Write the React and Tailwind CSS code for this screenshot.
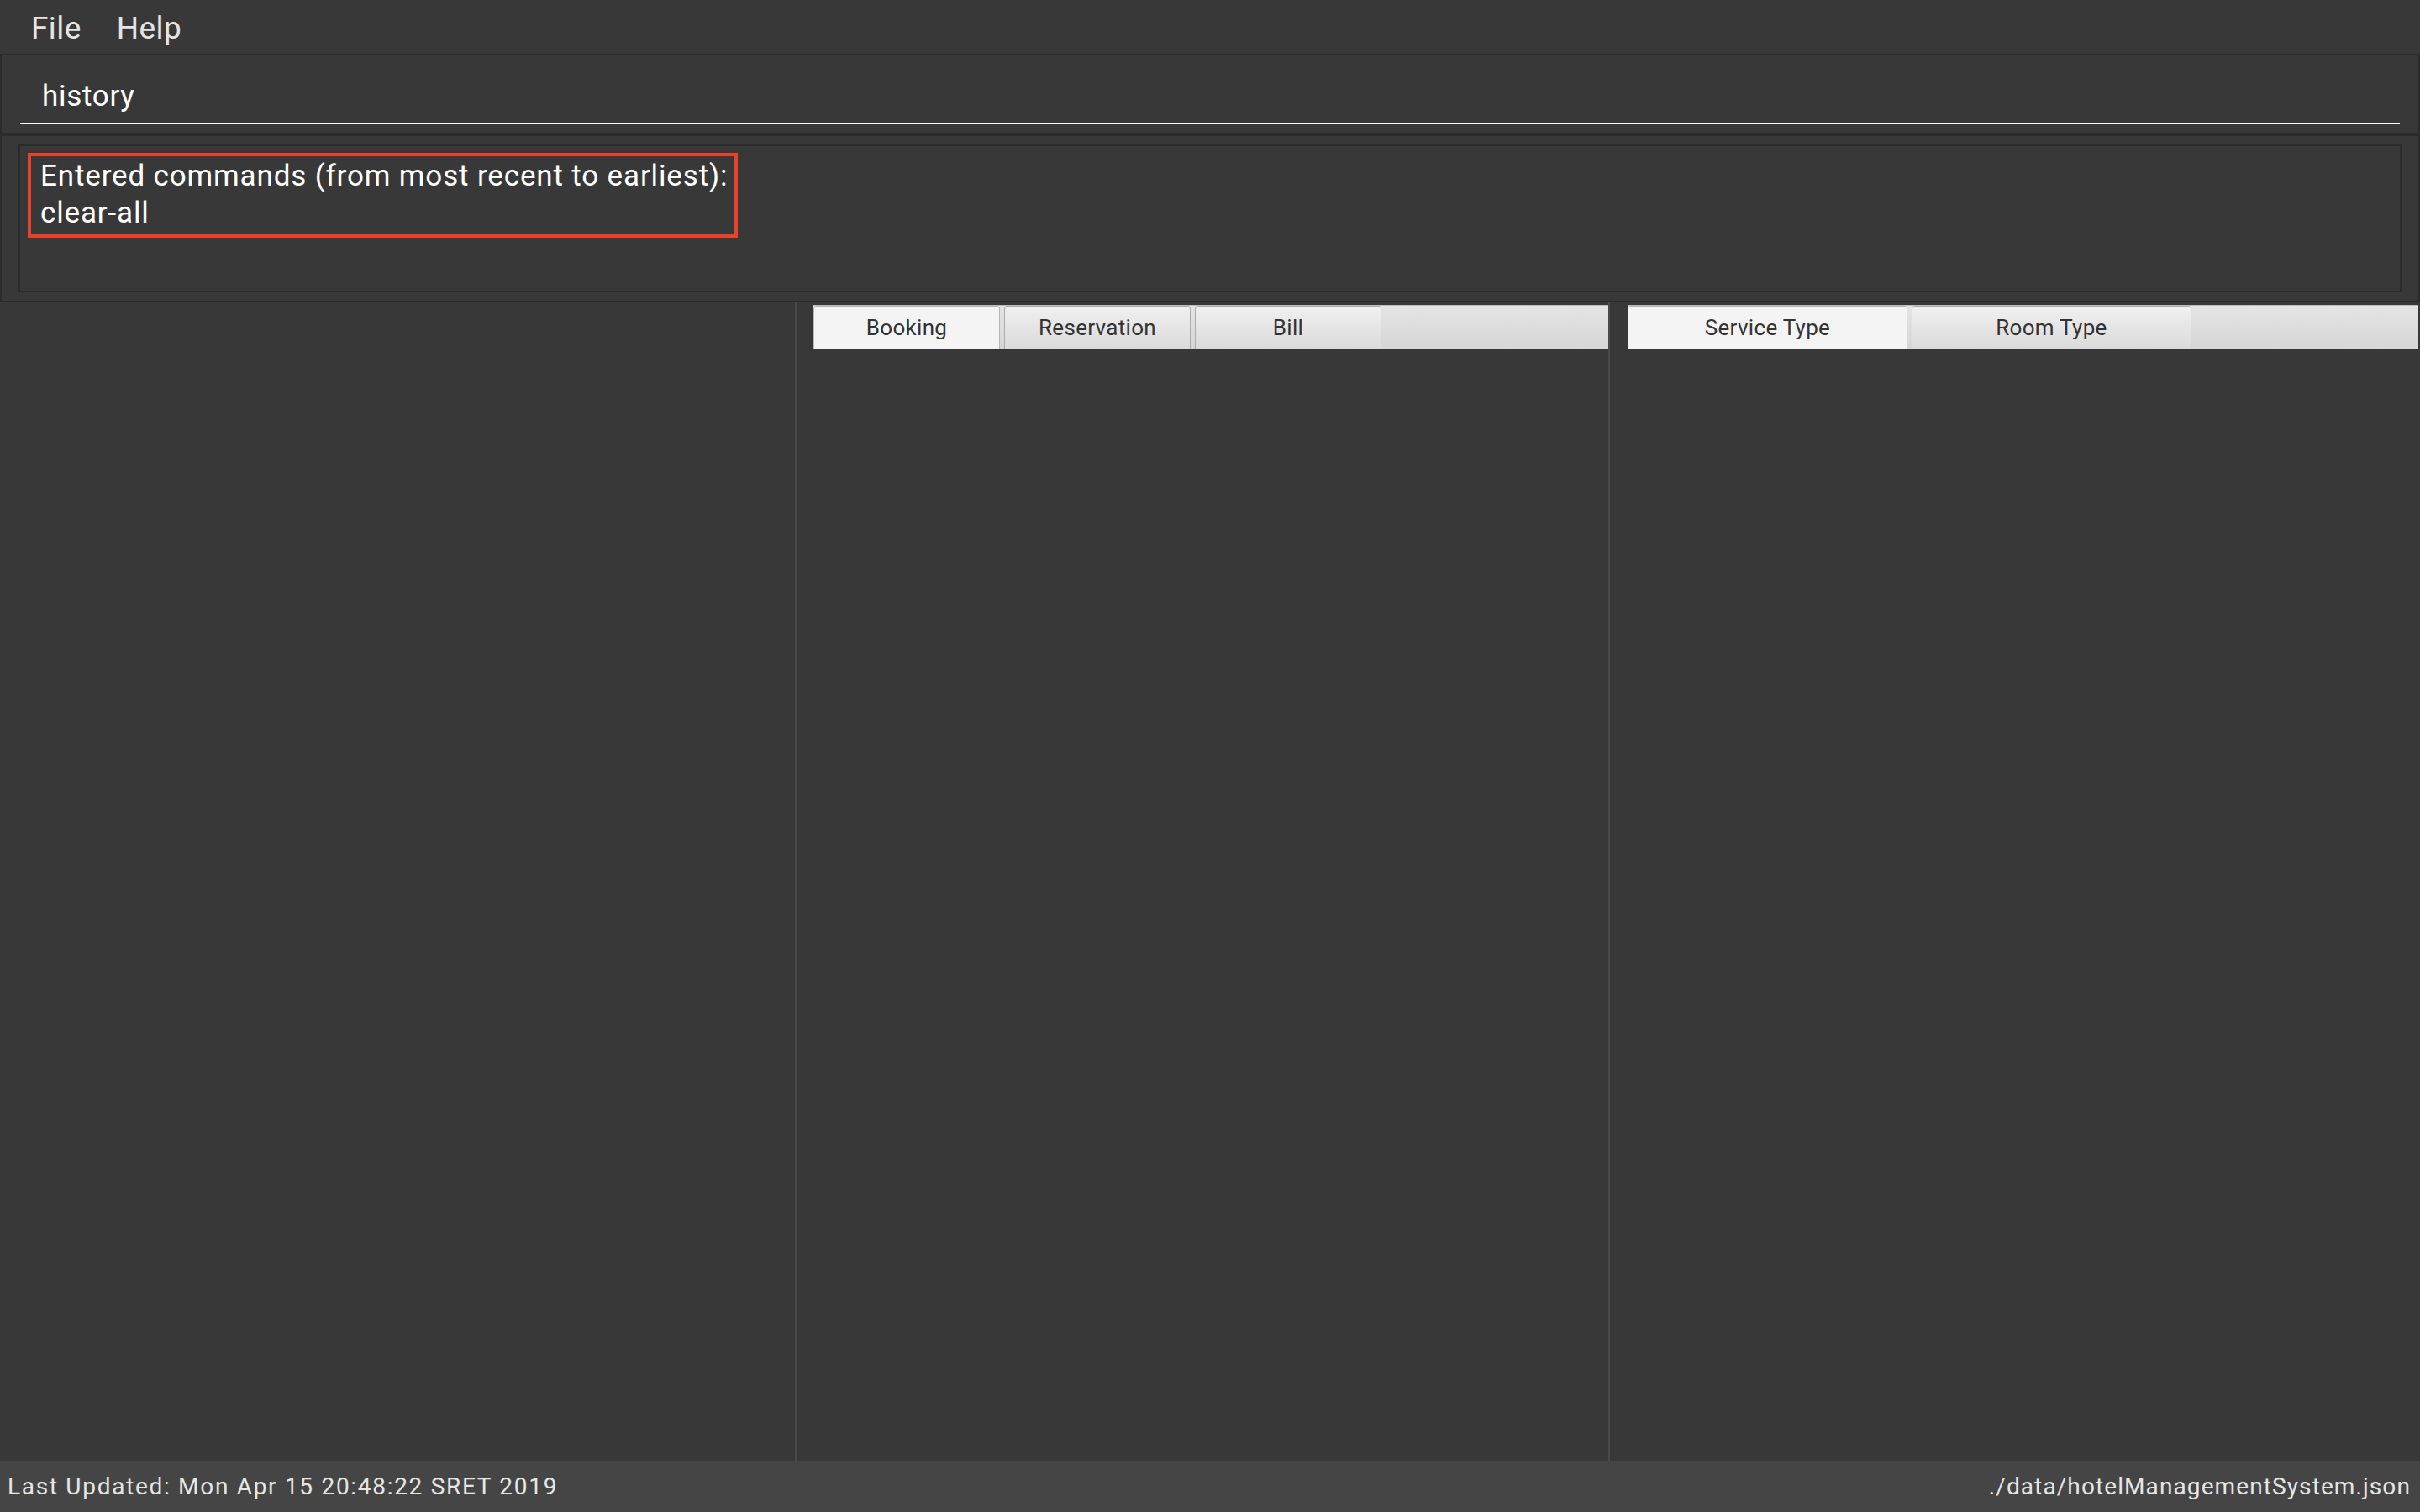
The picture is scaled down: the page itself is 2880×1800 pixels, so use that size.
export default function App() {
  const tabOff =
    "h-full flex items-center justify-center rounded-t-[4px] border border-b-0 border-[#acacac] bg-gradient-to-b from-[#f0f0f0] to-[#dadada] text-[26px] tracking-[0.3px] text-[#333333]";
  const tabOn =
    "h-full flex items-center justify-center rounded-t-[4px] border border-b-0 border-[#b5b5b5] bg-[#f4f4f4] text-[26px] tracking-[0.3px] text-[#333333]";
  return (
    <div className="h-screen w-full flex flex-col bg-[#383838] font-['Roboto','Inter',sans-serif] overflow-hidden">
      {/* menu bar */}
      <div className="h-[66px] shrink-0 flex items-center gap-[42px] pl-[37px] pt-[3px] text-[37px] tracking-[0.4px] text-[#e4e4e4] border-b-2 border-[#2b2b2b]">
        <span>File</span>
        <span>Help</span>
      </div>

      {/* command box */}
      <div className="h-[94px] shrink-0 border-x-2 border-b-2 border-[#2b2b2b] px-[22px] pt-[20px]">
        <div className="h-[62px] border-b-2 border-white flex items-center pl-[26px] pb-[2px] text-[35px] tracking-[0.7px] text-white">
          history
        </div>
      </div>

      {/* result display */}
      <div className="h-[200px] shrink-0 border-x-2 border-y-2 border-[#2b2b2b] px-[20px] pt-[10px] pb-[10px]">
        <div className="h-full border-2 border-[#2b2b2b] pl-[9px] pt-[8px]">
          <div className="inline-block border-4 border-[#e8412c] pl-[11px] pr-[8px] pt-[2px] pb-[3px] text-[35px] leading-[44px] text-white tracking-[0.85px]">
            <div>Entered commands (from most recent to earliest):</div>
            <div>clear-all</div>
          </div>
        </div>
      </div>

      {/* split pane */}
      <div className="flex-1 flex min-h-0">
        <div className="w-[946px] shrink-0" />
        <div className="w-[2px] shrink-0 bg-[#4a4a4a]" />
        <div className="w-[966px] shrink-0 pl-[20px] pt-[3px]">
          <div className="h-[53px] flex gap-[5px] bg-gradient-to-b from-[#e4e4e4] to-[#d6d6d6] border-t border-[#bdbdbd]">
            <div className={tabOn + " w-[222px]"}>Booking</div>
            <div className={tabOff + " w-[222px]"}>Reservation</div>
            <div className={tabOff + " w-[222px]"}>Bill</div>
          </div>
        </div>
        <div className="w-[2px] shrink-0 bg-[#4a4a4a]" />
        <div className="flex-1 pl-[21px] pr-[2px] pt-[3px]">
          <div className="h-[53px] flex gap-[5px] bg-gradient-to-b from-[#e4e4e4] to-[#d6d6d6] border-t border-[#bdbdbd]">
            <div className={tabOn + " w-[333px]"}>Service Type</div>
            <div className={tabOff + " w-[333px]"}>Room Type</div>
          </div>
        </div>
      </div>

      {/* status bar */}
      <div className="h-[61px] shrink-0 bg-[#454545] flex items-center justify-between pl-[9px] pr-[11px] text-[28px] text-[#e6e6e6]">
        <span className="tracking-[1.7px]">Last Updated: Mon Apr 15 20:48:22 SRET 2019</span>
        <span className="tracking-[1.1px]">./data/hotelManagementSystem.json</span>
      </div>
    </div>
  );
}
